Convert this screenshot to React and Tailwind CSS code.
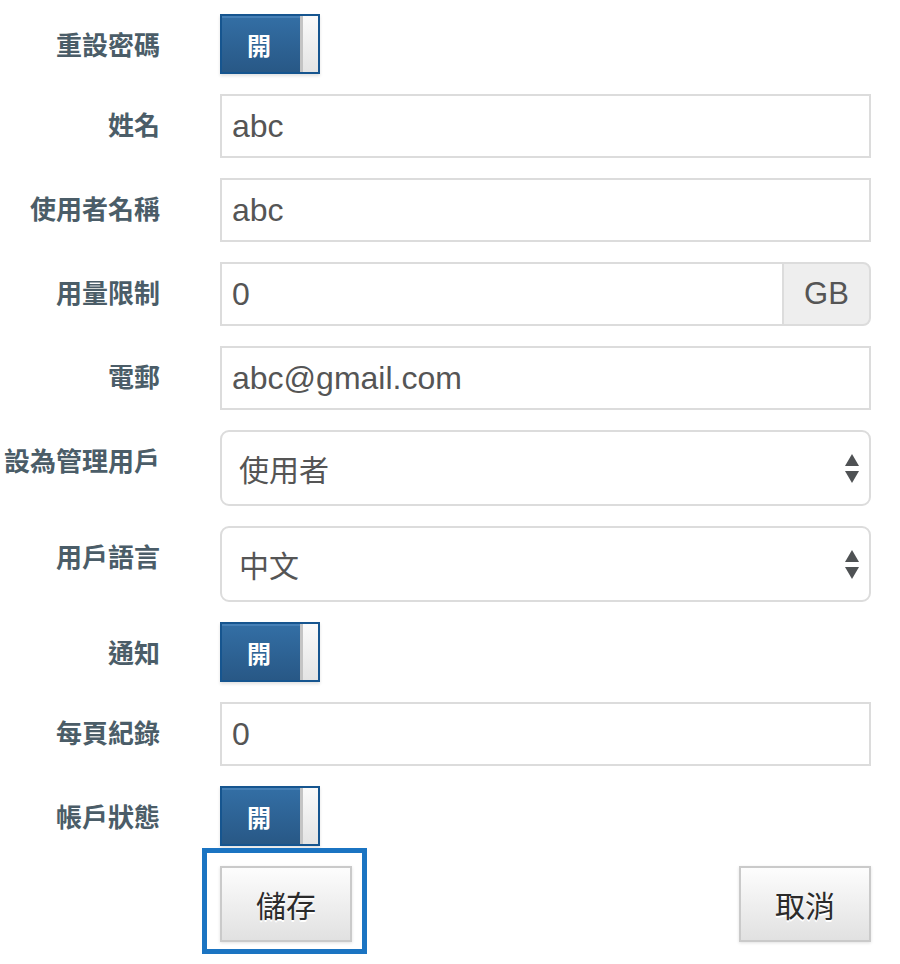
import React from "react";

const CJK = '"Noto Sans CJK TC", "Noto Sans", sans-serif';
const LAT = '"Liberation Sans", "Noto Sans CJK TC", Arial, sans-serif';

function Label({ children }) {
  return (
    <div
      className="w-[160px] shrink-0 text-right text-[26px] font-bold leading-[60px] text-[#4b5d68] whitespace-nowrap"
      style={{ fontFamily: CJK }}
    >
      {children}
    </div>
  );
}

function Row({ label, children }) {
  return (
    <div className="flex items-start">
      <Label>{label}</Label>
      <div className="ml-[60px] w-[651px]">{children}</div>
    </div>
  );
}

function Toggle() {
  return (
    <div className="flex h-[60px] w-[100px] border-2 border-[#16558f] shadow-[0_2px_3px_rgba(0,0,0,0.12)]">
      <div
        className="flex w-[78px] items-center justify-center border-t-2 border-[#4680b6] bg-gradient-to-b from-[#336ea4] to-[#285886] text-[24px] font-bold text-white"
        style={{ fontFamily: CJK }}
      >
        <span className="-ml-[4px]">開</span>
      </div>
      <div className="w-[18px] border-l-[3px] border-[#c4c4c4] bg-gradient-to-b from-[#fafafa] to-[#e4e4e4]" />
    </div>
  );
}

function TextInput({ value }) {
  return (
    <div
      className="flex h-[64px] items-center border-2 border-[#dcdcdc] bg-white pl-[10px] text-[32px] text-[#555]"
      style={{ fontFamily: LAT }}
    >
      {value}
    </div>
  );
}

function Select({ value }) {
  return (
    <div className="flex h-[76px] items-center justify-between rounded-[9px] border-2 border-[#dcdcdc] bg-white pl-[17px] pr-[9px]">
      <span className="text-[30px] text-[#555]" style={{ fontFamily: CJK }}>
        {value}
      </span>
      <svg width="16" height="32" viewBox="0 0 16 32" className="mt-[2px]">
        <polygon points="8,1 15,13 1,13" fill="#4f5254" />
        <polygon points="1,18 15,18 8,30" fill="#4f5254" />
      </svg>
    </div>
  );
}

function Button({ children }) {
  return (
    <div
      className="flex h-[76px] w-[132px] items-center justify-center border-2 border-[#cacaca] bg-gradient-to-b from-[#fdfdfd] to-[#e1e1e1] text-[30px] text-[#2b2b2b] shadow-[0_1px_3px_rgba(0,0,0,0.12)]"
      style={{ fontFamily: CJK, textShadow: "0 2px 0 #fff" }}
    >
      {children}
    </div>
  );
}

export default function App() {
  return (
    <div className="min-h-[964px] w-[900px] bg-white pt-[14px]">
      <div className="flex flex-col gap-[20px]">
        <Row label="重設密碼">
          <Toggle />
        </Row>
        <Row label="姓名">
          <TextInput value="abc" />
        </Row>
        <Row label="使用者名稱">
          <TextInput value="abc" />
        </Row>
        <Row label="用量限制">
          <div className="flex h-[64px]">
            <div
              className="flex flex-1 items-center border-2 border-r-0 border-[#dcdcdc] bg-white pl-[10px] text-[32px] text-[#555]"
              style={{ fontFamily: LAT }}
            >
              0
            </div>
            <div
              className="flex w-[89px] items-center justify-center rounded-r-[8px] border-2 border-[#dcdcdc] bg-[#eeeeee] text-[31px] text-[#555]"
              style={{ fontFamily: LAT }}
            >
              GB
            </div>
          </div>
        </Row>
        <Row label="電郵">
          <TextInput value="abc@gmail.com" />
        </Row>
        <Row label="設為管理用戶">
          <Select value="使用者" />
        </Row>
        <Row label="用戶語言">
          <Select value="中文" />
        </Row>
        <Row label="通知">
          <Toggle />
        </Row>
        <Row label="每頁紀錄">
          <TextInput value="0" />
        </Row>
        <Row label="帳戶狀態">
          <Toggle />
        </Row>
        <div className="flex">
          <div className="w-[160px] shrink-0" />
          <div className="ml-[60px] flex w-[651px] justify-between">
            <div className="relative">
              <div className="pointer-events-none absolute -bottom-[12px] -left-[18px] -right-[15px] -top-[18px] border-[5px] border-[#1b74c2]" />
              <Button>儲存</Button>
            </div>
            <Button>取消</Button>
          </div>
        </div>
      </div>
    </div>
  );
}
